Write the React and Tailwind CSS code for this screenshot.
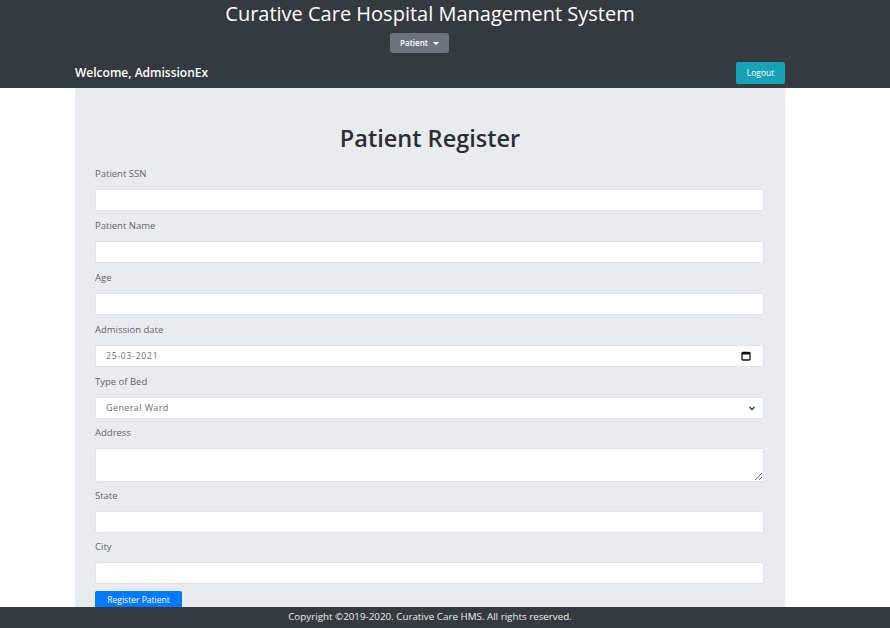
import React from "react";

const font = { fontFamily: '"Open Sans", "Noto Sans", sans-serif' };

function Field({ label, children, gap = "h-[8px]" }) {
  return (
    <div className="flex flex-col">
      <label className="text-[9.5px] leading-[14px] text-[#5f666d] mb-[8px]">{label}</label>
      {children}
      <div className={gap} />
    </div>
  );
}

function TextBox() {
  return <input type="text" className="h-[22px] w-full bg-white border border-[#dfe3e7] rounded-[2px] px-[9px] text-[9px] outline-none" />;
}

export default function App() {
  return (
    <div className="h-[628px] w-[890px] flex flex-col bg-white overflow-hidden" style={font}>
      {/* Header */}
      <div className="bg-[#343a40] h-[88px] flex flex-col shrink-0">
        <div className="ml-[75px] w-[710px] text-center text-white text-[20px] leading-[26px] pt-[1px]">
          Curative Care Hospital Management System
        </div>
        <div className="ml-[390px] mt-[6px]">
          <button className="h-[20px] w-[59px] bg-[#6c757d] rounded-[3px] text-[8px] font-semibold text-white flex items-center justify-center gap-[5px]">
            Patient
            <span className="border-l-[3px] border-r-[3px] border-t-[3px] border-l-transparent border-r-transparent border-t-white" />
          </button>
        </div>
        <div className="ml-[75px] w-[710px] mt-[9px] flex items-center justify-between">
          <span className="text-white text-[12px] font-semibold">Welcome, AdmissionEx</span>
          <button className="h-[22px] w-[49px] bg-[#17a2b8] rounded-[2px] text-white text-[8.5px]">Logout</button>
        </div>
      </div>

      {/* Main */}
      <div className="flex-1 overflow-hidden">
        <div className="ml-[75px] w-[710px] h-full bg-[#e9ecef] px-[20px] pt-[35px]">
          <h1 className="text-center text-[23.5px] leading-[30px] font-semibold text-[#2b2f33] mb-[14px]">Patient Register</h1>
          <div className="w-[669px]">
            <Field label="Patient SSN"><TextBox /></Field>
            <Field label="Patient Name"><TextBox /></Field>
            <Field label="Age"><TextBox /></Field>
            <Field label="Admission date">
              <div className="h-[22px] w-full bg-white border border-[#dfe3e7] rounded-[2px] pl-[10px] pr-[12px] flex items-center justify-between">
                <span className="text-[8.5px] text-[#6a7077] tracking-[0.8px]">25-03-2021</span>
                <svg width="10" height="10" viewBox="0 0 10 10">
                  <rect x="1" y="1.5" width="8" height="7.5" rx="1" fill="none" stroke="#111" strokeWidth="1.3" />
                  <rect x="1" y="1.5" width="8" height="2" fill="#111" />
                </svg>
              </div>
            </Field>
            <Field label="Type of Bed" gap="h-[7px]">
              <div className="h-[22px] w-full bg-white border border-[#dfe3e7] rounded-[2px] pl-[10px] pr-[6px] flex items-center justify-between">
                <span className="text-[9px] text-[#6a7077] tracking-[0.4px]">General Ward</span>
                <svg width="10" height="10" viewBox="0 0 10 10">
                  <path d="M2.5 4 L5 6.5 L7.5 4" fill="none" stroke="#333" strokeWidth="1.3" />
                </svg>
              </div>
            </Field>
            <Field label="Address" gap="h-[7px]">
              <textarea className="h-[34px] w-full bg-white border border-[#dfe3e7] rounded-[2px] block outline-none" />
            </Field>
            <Field label="State" gap="h-[7px]"><TextBox /></Field>
            <Field label="City" gap="h-[7px]"><TextBox /></Field>
            <button className="h-[20px] w-[87px] bg-[#007bff] rounded-[2px] text-white text-[8.5px] leading-[14px] flex items-start justify-center pt-[2px]">Register Patient</button>
          </div>
        </div>
      </div>

      {/* Footer */}
      <div className="bg-[#343a40] h-[21px] shrink-0 flex items-center">
        <div className="ml-[75px] w-[710px] text-center text-[#eceef0] text-[9.8px]">
          Copyright ©2019-2020. Curative Care HMS. All rights reserved.
        </div>
      </div>
    </div>
  );
}
